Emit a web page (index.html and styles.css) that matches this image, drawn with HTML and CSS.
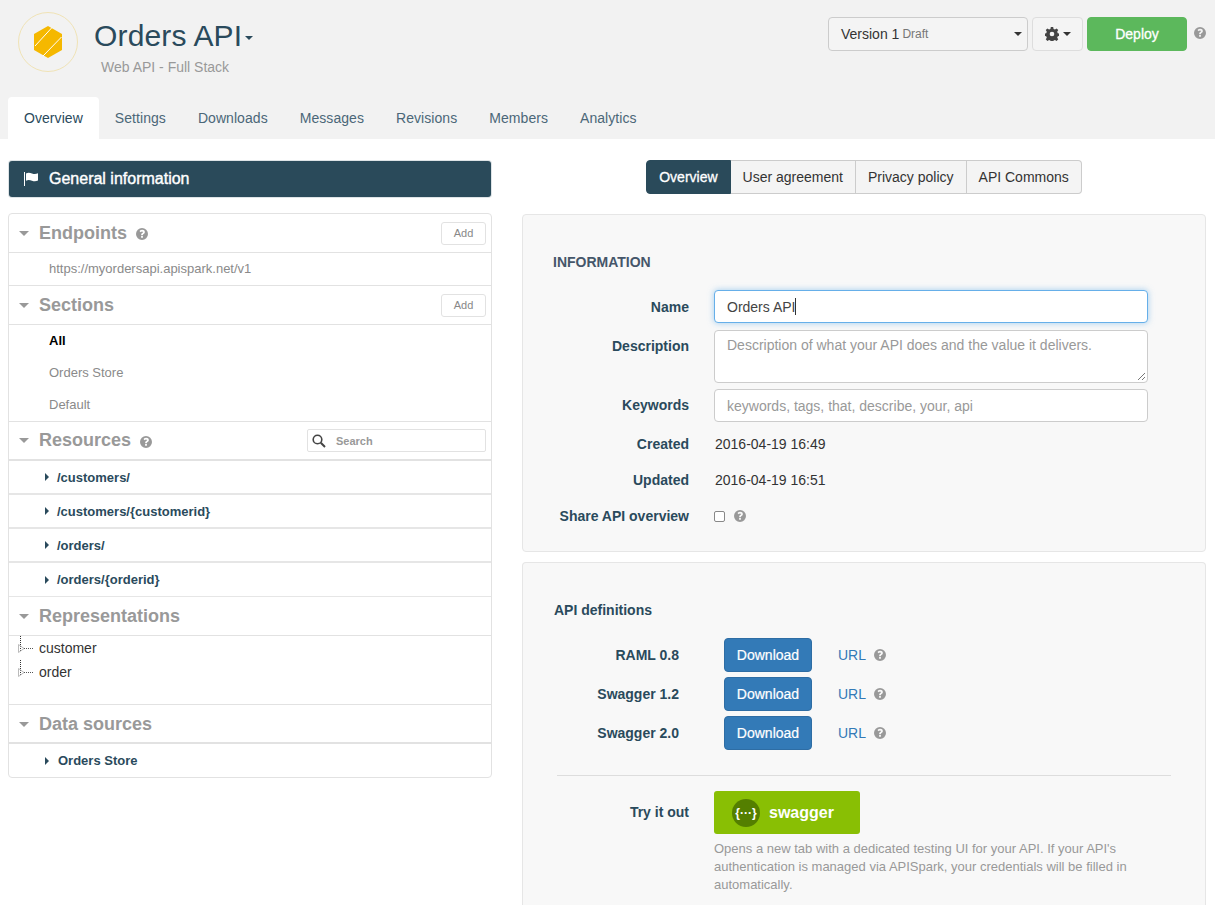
FILE: index.html
```html
<!DOCTYPE html>
<html lang="en">
<head>
    <meta charset="UTF-8">
    <title>Orders API</title>
    <link rel="stylesheet" href="styles.css">
</head>
<body>
    <svg class="defs" width="0" height="0">
        <symbol id="help" viewBox="0 0 24 24">
            <path fill-rule="evenodd" d="M12 0a12 12 0 1 0 0 24a12 12 0 1 0 0-24zM13.800 19.500h-3.600v-3.400h3.600zM13.800 14.600h-3.500c-.2-2.600 1-3.600 2.200-4.500c.8-.6 1.300-1 1.300-1.800c0-.9-.7-1.400-1.700-1.400c-1.100 0-2.100.5-3 1.500l-2.100-2.500c1.400-1.500 3.200-2.400 5.500-2.400c3 0 5.200 1.600 5.200 4.400c0 2.200-1.200 3.200-2.500 4.200c-1 .7-1.500 1.300-1.400 2.300z"/>
        </symbol>
        <symbol id="tree-node" viewBox="0 0 24 24">
            <path d="M3.500 0V15" stroke="#333" stroke-dasharray="1 1" fill="none"/>
            <path d="M7 12.500H16" stroke="#555" stroke-dasharray="1 1" fill="none"/>
            <path d="M1.500 8.500L7 12.500L1.500 16.500Z" fill="none" stroke="#bbb"/>
        </symbol>
    </svg>

    <header class="topbar">
        <div class="topbar-head">
            <div class="logo">
                <svg width="62" height="62" viewBox="0 0 62 62">
                    <circle cx="31" cy="31" r="29.500" fill="none" stroke="#f0e3b6"/>
                    <polygon points="31,15 45,23 45,39 31,47 17,39 17,23" fill="#f5b800"/>
                    <path d="M35 16.500L18 35M44.500 26L26 45" stroke="#fff" stroke-width="1" fill="none"/>
                </svg>
            </div>
            <div class="title-block">
                <h1>Orders API<span class="caret caret-title"></span></h1>
                <p>Web API - Full Stack</p>
            </div>
            <div class="actions">
                <div class="version-select">
                    <span>Version 1</span><small>Draft</small>
                    <i class="caret caret-dark"></i>
                </div>
                <button class="btn-gear">
                    <svg width="14" height="14" viewBox="0 0 24 24"><path fill="#444" fill-rule="evenodd" d="M10 0h4l.7 3.300l2.400 1l2.800-1.800l2.800 2.800l-1.800 2.800l1 2.400l3.100.7v4l-3.100.7l-1 2.400l1.800 2.800l-2.800 2.800l-2.800-1.800l-2.400 1l-.7 3.100h-4l-.7-3.100l-2.400-1l-2.800 1.800l-2.800-2.800l1.800-2.800l-1-2.400l-3.100-.7v-4l3.100-.7l1-2.400l-1.800-2.800l2.800-2.800l2.800 1.800l2.400-1zM12 8a4 4 0 1 0 0 8a4 4 0 1 0 0-8z"/></svg>
                    <i class="caret caret-dark"></i>
                </button>
                <button class="btn-deploy">Deploy</button>
                <svg class="help help-top"><use href="#help"/></svg>
            </div>
        </div>
        <nav class="tabs">
            <a class="tab active">Overview</a>
            <a class="tab">Settings</a>
            <a class="tab">Downloads</a>
            <a class="tab">Messages</a>
            <a class="tab">Revisions</a>
            <a class="tab">Members</a>
            <a class="tab">Analytics</a>
        </nav>
    </header>

    <main class="content">
        <aside class="sidebar">
            <div class="general-bar">
                <svg width="16" height="14" viewBox="0 0 16 14"><path fill="#fff" d="M0 0h1v14H0zM2 1.500c2-1.200 4-.8 6 0s4 .8 6-.2v7.200c-2 1-4 1-6 .2s-4-1.200-6 0z"/></svg>
                General information
            </div>
            <div class="tree-panel">
                <div class="panel-head">
                    <i class="caret caret-section"></i>
                    <h3>Endpoints</h3>
                    <svg class="help help-section"><use href="#help"/></svg>
                    <button class="btn-add">Add</button>
                </div>
                <div class="endpoint-row">https://myordersapi.apispark.net/v1</div>

                <div class="panel-head">
                    <i class="caret caret-section"></i>
                    <h3>Sections</h3>
                    <button class="btn-add">Add</button>
                </div>
                <ul class="section-list">
                    <li class="selected">All</li>
                    <li>Orders Store</li>
                    <li>Default</li>
                </ul>

                <div class="panel-head head-thick">
                    <i class="caret caret-section"></i>
                    <h3>Resources</h3>
                    <svg class="help help-section"><use href="#help"/></svg>
                    <div class="search-box">
                        <svg width="14" height="14" viewBox="0 0 14 14"><circle cx="5.500" cy="5.500" r="4.300" fill="none" stroke="#444" stroke-width="1.600"/><path d="M8.800 8.800L13 13" stroke="#444" stroke-width="2"/></svg>
                        <span>Search</span>
                    </div>
                </div>
                <div class="resource-row"><i class="caret caret-right"></i>/customers/</div>
                <div class="resource-row"><i class="caret caret-right"></i>/customers/{customerid}</div>
                <div class="resource-row"><i class="caret caret-right"></i>/orders/</div>
                <div class="resource-row row-last"><i class="caret caret-right"></i>/orders/{orderid}</div>

                <div class="panel-head">
                    <i class="caret caret-section"></i>
                    <h3>Representations</h3>
                </div>
                <ul class="repr-tree">
                    <li><svg width="24" height="24"><use href="#tree-node"/></svg>customer</li>
                    <li><svg width="24" height="24"><use href="#tree-node"/></svg>order</li>
                </ul>

                <div class="panel-head head-thick head-data">
                    <i class="caret caret-section"></i>
                    <h3>Data sources</h3>
                </div>
                <div class="source-row"><i class="caret caret-right"></i>Orders Store</div>
            </div>
        </aside>

        <section class="details">
            <div class="pill-group">
                <a class="pill active">Overview</a>
                <a class="pill">User agreement</a>
                <a class="pill">Privacy policy</a>
                <a class="pill">API Commons</a>
            </div>

            <div class="card">
                <h4 class="card-title caps">INFORMATION</h4>
                <div class="form-row">
                    <label>Name</label>
                    <div class="fake-input focused">Orders API<span class="cursor"></span></div>
                </div>
                <div class="form-row row-desc">
                    <label>Description</label>
                    <div class="fake-input area">
                        <span class="placeholder">Description of what your API does and the value it delivers.</span>
                        <svg class="resize-grip" width="9" height="9" viewBox="0 0 9 9"><path d="M1 8L8 1M5 8L8 5" stroke="#777" fill="none"/></svg>
                    </div>
                </div>
                <div class="form-row row-keywords">
                    <label>Keywords</label>
                    <div class="fake-input"><span class="placeholder">keywords, tags, that, describe, your, api</span></div>
                </div>
                <div class="static-row first"><label>Created</label><span>2016-04-19 16:49</span></div>
                <div class="static-row"><label>Updated</label><span>2016-04-19 16:51</span></div>
                <div class="static-row">
                    <label>Share API overview</label>
                    <i class="check"></i>
                    <svg class="help help-small"><use href="#help"/></svg>
                </div>
            </div>

            <div class="card card-defs">
                <h4 class="card-title">API definitions</h4>
                <div class="def-row">
                    <label>RAML 0.8</label>
                    <button class="btn-download">Download</button>
                    <a class="url">URL</a>
                    <svg class="help help-small"><use href="#help"/></svg>
                </div>
                <div class="def-row">
                    <label>Swagger 1.2</label>
                    <button class="btn-download">Download</button>
                    <a class="url">URL</a>
                    <svg class="help help-small"><use href="#help"/></svg>
                </div>
                <div class="def-row">
                    <label>Swagger 2.0</label>
                    <button class="btn-download">Download</button>
                    <a class="url">URL</a>
                    <svg class="help help-small"><use href="#help"/></svg>
                </div>
                <hr>
                <div class="try-row">
                    <label>Try it out</label>
                    <div class="btn-swagger"><span class="swagger-mark">{···}</span>swagger</div>
                </div>
                <p class="try-help">Opens a new tab with a dedicated testing UI for your API. If your API's authentication is managed via APISpark, your credentials will be filled in automatically.</p>
            </div>
        </section>
    </main>
</body>
</html>
```

FILE: styles.css
```css
html, body {
    height: 907px;
    overflow: hidden;
}

body {
    margin: 0;
    background-color: #fff;
    font-family: "Liberation Sans", Arial, sans-serif;
    font-size: 14px;
    color: #333;
}

h1, h3, h4, p, ul {
    margin: 0;
    padding: 0;
}

ul {
    list-style: none;
}

button {
    font-family: inherit;
    cursor: pointer;
}

.defs {
    display: block;
    height: 0;
}

.caret {
    display: inline-block;
    width: 0;
    height: 0;
    border-left: 4px solid transparent;
    border-right: 4px solid transparent;
    border-top: 4px solid #444;
}

.help {
    fill: #999;
    flex: none;
}

/* top bar */
.topbar {
    background-color: #f2f2f2;
    height: 139px;
}

.topbar-head {
    display: flex;
    height: 97px;
    padding: 11px 9px 0 17px;
    box-sizing: border-box;
}

.logo {
    width: 62px;
    height: 62px;
}

.title-block {
    margin-left: 15px;
    padding-top: 7px;
}

.title-block h1 {
    font-size: 30px;
    line-height: 36px;
    font-weight: normal;
    letter-spacing: 0.15px;
    color: #2a4a5c;
}

.caret-title {
    margin-left: 3px;
    vertical-align: 6px;
    border-top-color: #2a4a5c;
}

.title-block p {
    margin: 3px 0 0 7px;
    line-height: 20px;
    color: #999;
}

.actions {
    display: flex;
    align-items: flex-start;
    gap: 4px;
    margin-left: auto;
    padding-top: 6px;
}

.version-select {
    display: flex;
    align-items: center;
    width: 200px;
    height: 34px;
    padding-left: 12px;
    box-sizing: border-box;
    border: 1px solid #ccc;
    border-radius: 4px;
    background-color: #f4f4f4;
}

.version-select small {
    margin-left: 3px;
    font-size: 12px;
    color: #777;
}

.caret-dark {
    border-top-color: #333;
}

.version-select .caret {
    margin-left: auto;
    margin-right: 5px;
}

.btn-gear {
    display: flex;
    align-items: center;
    justify-content: center;
    gap: 4px;
    width: 51px;
    height: 34px;
    padding: 0;
    border: 1px solid #ddd;
    border-radius: 4px;
    background-color: #f4f4f4;
}

.btn-deploy {
    width: 100px;
    height: 34px;
    border: 1px solid #5cb85c;
    border-radius: 4px;
    background-color: #5cb85c;
    color: #fff;
    font-size: 14px;
    -webkit-text-stroke: 0.3px #fff;
}

.help-top {
    width: 12px;
    height: 12px;
    margin: 10px 0 0 3px;
}

.tabs {
    display: flex;
    height: 42px;
    padding-left: 8px;
}

.tab {
    padding: 0 16px;
    line-height: 42px;
    letter-spacing: 0.06px;
    color: #4b6778;
    border-radius: 4px 4px 0 0;
}

.tab.active {
    background-color: #fff;
    color: #2a4a5c;
}

/* main columns */
.content {
    display: flex;
    align-items: flex-start;
    gap: 30px;
    padding: 22px 9px 0 8px;
}

.sidebar {
    width: 484px;
    flex: none;
}

.general-bar {
    display: flex;
    align-items: center;
    gap: 9px;
    height: 36px;
    margin: 0 1px;
    padding-left: 15px;
    border-radius: 3px;
    background-color: #2a4a5a;
    color: #fff;
    font-size: 16px;
    -webkit-text-stroke: 0.4px #fff;
    box-shadow: 0 0 0 1px #dde3e6;
}

.tree-panel {
    margin-top: 16px;
    border: 1px solid #e2e2e2;
    border-radius: 4px;
}

.panel-head {
    display: flex;
    align-items: center;
    height: 38px;
    padding: 0 5px 0 10px;
    border-bottom: 1px solid #e2e2e2;
}

.head-thick {
    border-bottom-width: 2px;
    height: 37px;
}

.head-data {
    height: 36px;
    padding-top: 1px;
}

.caret-section {
    margin-right: 10px;
    border-left-width: 5px;
    border-right-width: 5px;
    border-top-width: 5px;
    border-top-color: #999;
}

.panel-head h3 {
    font-size: 18px;
    font-weight: bold;
    color: #999;
}

.help-section {
    width: 12px;
    height: 12px;
    margin: 2px 0 0 9px;
}

.btn-add {
    width: 45px;
    height: 23px;
    margin-left: auto;
    padding: 0;
    border: 1px solid #e2e2e2;
    border-radius: 3px;
    background-color: #fff;
    color: #888;
    font-size: 11px;
}

.endpoint-row {
    height: 32px;
    padding-left: 40px;
    line-height: 31px;
    border-bottom: 1px solid #e2e2e2;
    font-size: 13px;
    color: #8a8a8a;
}

.section-list {
    border-bottom: 1px solid #e2e2e2;
}

.section-list li {
    height: 32px;
    padding-left: 40px;
    line-height: 32px;
    font-size: 13px;
    color: #8a8a8a;
}

.section-list .selected {
    color: #000;
    font-weight: bold;
}

.search-box {
    display: flex;
    align-items: center;
    gap: 10px;
    width: 179px;
    height: 23px;
    margin-left: auto;
    padding-left: 4px;
    box-sizing: border-box;
    border: 1px solid #e2e2e2;
    border-radius: 2px;
    font-size: 11px;
    font-weight: bold;
    color: #999;
}

.resource-row, .source-row {
    display: flex;
    align-items: center;
    height: 32px;
    padding-left: 36px;
    border-bottom: 2px solid #e6e6e6;
    font-size: 13px;
    font-weight: bold;
    color: #2a4a5c;
}

.row-last {
    border-bottom-width: 1px;
    height: 33px;
}

.source-row {
    height: 33px;
    border-bottom: 0;
}

.caret-right {
    margin-right: 8px;
    border-top: 4px solid transparent;
    border-bottom: 4px solid transparent;
    border-left: 4px solid #2a4a5c;
    border-right: 0;
}

.source-row .caret-right {
    margin-right: 9px;
}

.repr-tree {
    height: 68px;
    border-bottom: 1px solid #e2e2e2;
}

.repr-tree li {
    display: flex;
    align-items: center;
    height: 24px;
    padding-left: 8px;
    font-size: 14px;
}

.repr-tree svg {
    margin-right: -2px;
    width: 24px;
}

.details {
    flex: 1;
    min-width: 0;
}

.pill-group {
    display: flex;
    justify-content: center;
    height: 34px;
    margin: -1px 0 20px;
}

.pill {
    padding: 0 12px;
    line-height: 32px;
    border: 1px solid #ccc;
    border-left-width: 0;
    background-color: #f4f4f4;
    color: #333;
}

.pill:last-child {
    border-radius: 0 4px 4px 0;
}

.pill.active {
    border-color: #2a4a5a;
    border-left-width: 1px;
    border-radius: 4px 0 0 4px;
    background-color: #2a4a5a;
    color: #fff;
    -webkit-text-stroke: 0.3px #fff;
}

.card {
    height: 338px;
    margin-bottom: 10px;
    padding: 37px 30px 0;
    box-sizing: border-box;
    border: 1px solid #e6e6e6;
    border-radius: 4px;
    background-color: #f8f8f8;
}

.card-defs {
    height: 343px;
    margin-bottom: 0;
    border-bottom: 0;
    border-radius: 4px 4px 0 0;
}

.card-title {
    margin-bottom: 18px;
    line-height: 20px;
    font-size: 14px;
    font-weight: bold;
    color: #2a4a5c;
}

.card-title.caps {
    color: #45566a;
}

.card-defs .card-title {
    margin-left: 1px;
}

.form-row {
    display: flex;
    align-items: center;
    margin-bottom: 6px;
}

.row-desc {
    align-items: flex-start;
}

label {
    width: 136px;
    flex: none;
    text-align: right;
    font-weight: bold;
    color: #2a4a5c;
}

.row-desc label {
    padding-top: 8px;
}

.row-keywords label {
    padding-bottom: 2px;
}

.fake-input {
    position: relative;
    width: 434px;
    height: 33px;
    margin-left: 25px;
    padding: 0 12px;
    box-sizing: border-box;
    display: flex;
    align-items: center;
    border: 1px solid #ccc;
    border-radius: 4px;
    background-color: #fff;
    color: #444;
}

.fake-input.focused {
    border-color: #66afe9;
    box-shadow: 0 0 6px rgba(102, 175, 233, 0.6);
    margin-bottom: 1px;
}

.fake-input.area {
    height: 53px;
    align-items: flex-start;
    padding-top: 6px;
}

.placeholder {
    color: #999;
}

.cursor {
    width: 1px;
    height: 17px;
    background-color: #333;
}

.resize-grip {
    position: absolute;
    right: 1px;
    bottom: 1px;
}

.static-row {
    display: flex;
    align-items: center;
    height: 36px;
}

.static-row.first {
    margin-top: -2px;
}

.static-row span {
    margin-left: 26px;
    color: #333;
}

.check {
    width: 11px;
    height: 11px;
    margin-left: 25px;
    box-sizing: border-box;
    border: 1px solid #888;
    border-radius: 2px;
    background-color: #fff;
}

.help-small {
    width: 12px;
    height: 12px;
    margin-left: 9px;
}

.def-row {
    display: flex;
    align-items: center;
    height: 34px;
    margin-bottom: 5px;
}

.def-row label {
    width: 125px;
    margin-left: 1px;
}

.def-row .help-small {
    margin-left: 8px;
}

.btn-download {
    width: 88px;
    height: 34px;
    margin-left: 45px;
    padding: 0;
    border: 1px solid #2e6da4;
    border-radius: 4px;
    background-color: #337ab7;
    color: #fff;
    font-size: 14px;
    -webkit-text-stroke: 0.2px #fff;
}

.url {
    margin-left: 26px;
    color: #337ab7;
}

hr {
    width: 614px;
    margin: 25px 0 15px 4px;
    border: 0;
    border-top: 1px solid #ddd;
}

.try-row {
    display: flex;
    align-items: center;
}

.try-row label {
    padding-bottom: 2px;
}

.btn-swagger {
    display: flex;
    align-items: center;
    width: 146px;
    height: 43px;
    margin-left: 25px;
    padding-left: 18px;
    box-sizing: border-box;
    border-radius: 3px;
    background-color: #89bf04;
    color: #fff;
    font-size: 16px;
    font-weight: bold;
}

.swagger-mark {
    width: 28px;
    height: 28px;
    margin-right: 9px;
    border-radius: 50%;
    background-color: #547f00;
    font-size: 12px;
    line-height: 28px;
    text-align: center;
}

.try-help {
    width: 434px;
    margin: 6px 0 0 161px;
    line-height: 18px;
    font-size: 13px;
    color: #999;
}
```
